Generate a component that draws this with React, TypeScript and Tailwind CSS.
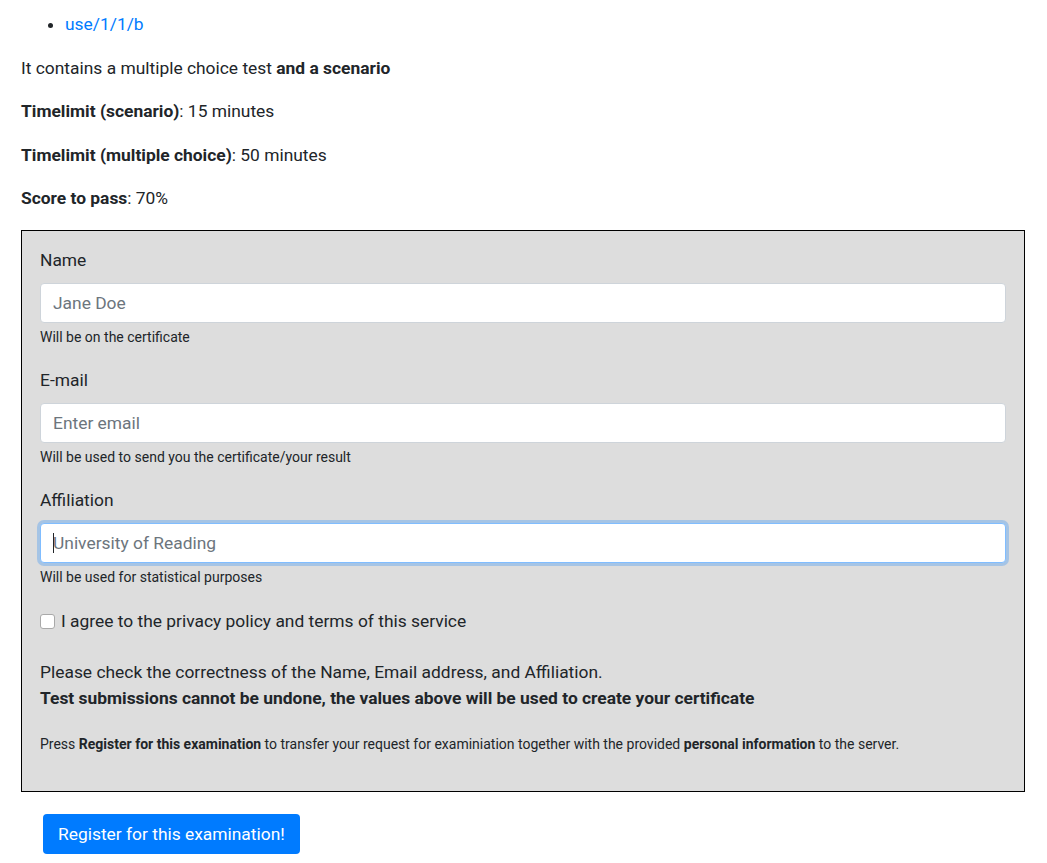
export default function App() {
  const fields = [
    { label: "Name", placeholder: "Jane Doe", help: "Will be on the certificate", focused: false },
    { label: "E-mail", placeholder: "Enter email", help: "Will be used to send you the certificate/your result", focused: false },
    { label: "Affiliation", placeholder: "University of Reading", help: "Will be used for statistical purposes", focused: true },
  ];

  return (
    <div className="min-h-screen bg-white px-[21px] pt-[11px] text-[17.4px] leading-[26px] text-[#212529] [font-family:Roboto,'Liberation_Sans',sans-serif]">
      <ul className="mb-[18px] list-disc pl-[44px]">
        <li>
          <a href="#" className="text-[#007bff]">use/1/1/b</a>
        </li>
      </ul>
      <p className="mb-[17px]">
        It contains a multiple choice test <b className="font-bold">and a scenario</b>
      </p>
      <p className="mb-[18px]">
        <b className="font-bold">Timelimit (scenario)</b>: 15 minutes
      </p>
      <p className="mb-[17px]">
        <b className="font-bold">Timelimit (multiple choice)</b>: 50 minutes
      </p>
      <p className="mb-[19px]">
        <b className="font-bold">Score to pass</b>: 70%
      </p>

      <form className="w-[1004px] border border-black bg-[#dddddd] px-[18px] pt-[16px] pb-[37px]">
        {fields.map((f) => (
          <div key={f.label} className="mb-[20px]">
            <label className="mb-[10px] block">{f.label}</label>
            <div className="relative">
              <input
                type="text"
                placeholder={f.placeholder}
                className={
                  f.focused
                    ? "block h-[40px] w-full rounded-[4px] border border-[#80bdff] bg-white px-[12px] text-[17.4px] text-[#495057] shadow-[0_0_0_3px_rgba(0,123,255,0.25)] outline-none placeholder:text-[#6c757d]"
                    : "block h-[40px] w-full rounded-[4px] border border-[#ced4da] bg-white px-[12px] text-[17.4px] text-[#495057] outline-none placeholder:text-[#6c757d]"
                }
              />
              {f.focused && (
                <span className="absolute left-[13px] top-[10px] h-[20px] w-px bg-[#212529]" />
              )}
            </div>
            <small className="mt-[4px] block text-[14px] leading-[20px]">{f.help}</small>
          </div>
        ))}

        <div className="mt-[21px] flex items-center">
          <span className="mr-[6px] inline-block h-[15px] w-[15px] rounded-[3px] border border-[#a9a9a9] bg-white" />
          <span>I agree to the privacy policy and terms of this service</span>
        </div>

        <p className="mt-[25px]">
          Please check the correctness of the Name, Email address, and Affiliation.
          <br />
          <b className="font-bold">
            Test submissions cannot be undone, the values above will be used to create your certificate
          </b>
        </p>

        <p className="mt-[23px] text-[14px] leading-[20px]">
          Press <b className="font-bold">Register for this examination</b> to transfer your request for
          examiniation together with the provided <b className="font-bold">personal information</b> to the
          server.
        </p>
      </form>

      <div className="pl-[22px] pt-[22px]">
        <button
          type="button"
          className="h-[40px] rounded-[4px] bg-[#007bff] px-[15px] text-[17.4px] text-white"
        >
          Register for this examination!
        </button>
      </div>
    </div>
  );
}
